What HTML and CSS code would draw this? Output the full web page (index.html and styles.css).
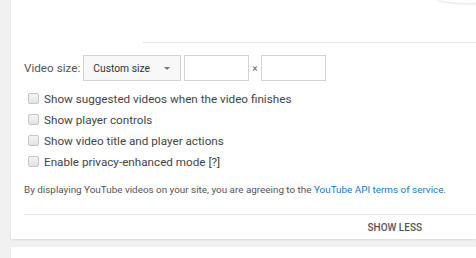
FILE: index.html
```html
<!DOCTYPE html>
<html lang="en">
<head>
    <meta charset="UTF-8">
    <meta name="viewport" content="width=device-width, initial-scale=1.0">
    <title>Share - Embed options</title>
    <link rel="stylesheet" href="styles.css">
</head>
<body>
    <div class="card">
        <div class="curl"></div>
        <div class="preview-edge"></div>

        <div class="size-row">
            <span class="size-label">Video size:</span>
            <div class="size-select">
                <span>Custom size</span>
                <span class="arrow"></span>
            </div>
            <input class="size-input" type="text">
            <span class="times">&times;</span>
            <input class="size-input" type="text">
        </div>

        <ul class="options">
            <li><span class="check"></span>Show suggested videos when the video finishes</li>
            <li><span class="check"></span>Show player controls</li>
            <li><span class="check"></span>Show video title and player actions</li>
            <li><span class="check"></span>Enable privacy-enhanced mode [?]</li>
        </ul>

        <p class="terms">By displaying YouTube videos on your site, you are agreeing to the <a href="#">YouTube API terms of service</a>.</p>

        <div class="card-footer">
            <button class="show-less">Show less</button>
        </div>
    </div>
    <div class="card next"></div>
</body>
</html>
```

FILE: styles.css
```css
body {
    margin: 0;
    background: #f1f1f1;
    font-family: Roboto, "Liberation Sans", Arial, sans-serif;
    overflow: hidden;
}

.card {
    position: relative;
    margin-left: 11px;
    height: 239px;
    padding-left: 13px;
    background: #fff;
    box-shadow: 0 1px 2px rgba(0, 0, 0, 0.1);
    box-sizing: border-box;
    overflow: hidden;
}

.card.next {
    margin-top: 8px;
    height: 40px;
}

.curl {
    position: absolute;
    top: -9px;
    right: -24px;
    width: 64px;
    height: 12px;
    border-radius: 50%;
    box-shadow: 0 1px 3px rgba(0, 0, 0, 0.12);
    background: #fff;
}

.preview-edge {
    height: 42px;
    margin-left: 119px;
    border-bottom: 1px solid #e3e3e3;
}

.size-row {
    display: flex;
    align-items: center;
    margin-top: 12px;
    height: 26px;
}

.size-label {
    font-size: 11.7px;
    color: #555;
    margin-right: 3px;
}

.size-select {
    display: flex;
    align-items: center;
    justify-content: space-between;
    box-sizing: border-box;
    width: 98px;
    height: 26px;
    padding: 0 10px 0 9px;
    background: #f8f8f8;
    border: 1px solid #d3d3d3;
    font-size: 10.3px;
    color: #333;
}

.arrow {
    width: 0;
    height: 0;
    border-left: 3px solid transparent;
    border-right: 3px solid transparent;
    border-top: 3px solid #777;
}

.size-input {
    box-sizing: border-box;
    width: 65px;
    height: 26px;
    margin: 0 0 0 3px;
    padding: 0;
    border: 1px solid #d3d3d3;
    background: #fff;
}

.times {
    font-size: 10px;
    color: #666;
    margin: 0 0 0 3px;
}

.options {
    list-style: none;
    margin: 7px 0 0;
    padding: 0;
}

.options li {
    display: flex;
    align-items: center;
    height: 21px;
    font-size: 11.7px;
    color: #444;
}

.check {
    box-sizing: border-box;
    width: 11px;
    height: 11px;
    margin: 0 5px 0 4px;
    border: 1px solid #c6c6c6;
    border-radius: 2px;
    background: linear-gradient(#f4f4f4, #e2e2e2);
}

.terms {
    margin: 10px 0 0;
    font-size: 9.9px;
    line-height: 16px;
    color: #555;
    white-space: nowrap;
}

.terms a {
    color: #167ac6;
    text-decoration: none;
}

.card-footer {
    margin-top: 16px;
    border-top: 1px solid #e3e3e3;
    display: flex;
    justify-content: flex-end;
    padding-right: 44px;
}

.show-less {
    height: 24px;
    padding: 0 10px;
    border: none;
    background: none;
    font-family: inherit;
    font-size: 10px;
    font-weight: 500;
    text-transform: uppercase;
    color: #555;
}
```
